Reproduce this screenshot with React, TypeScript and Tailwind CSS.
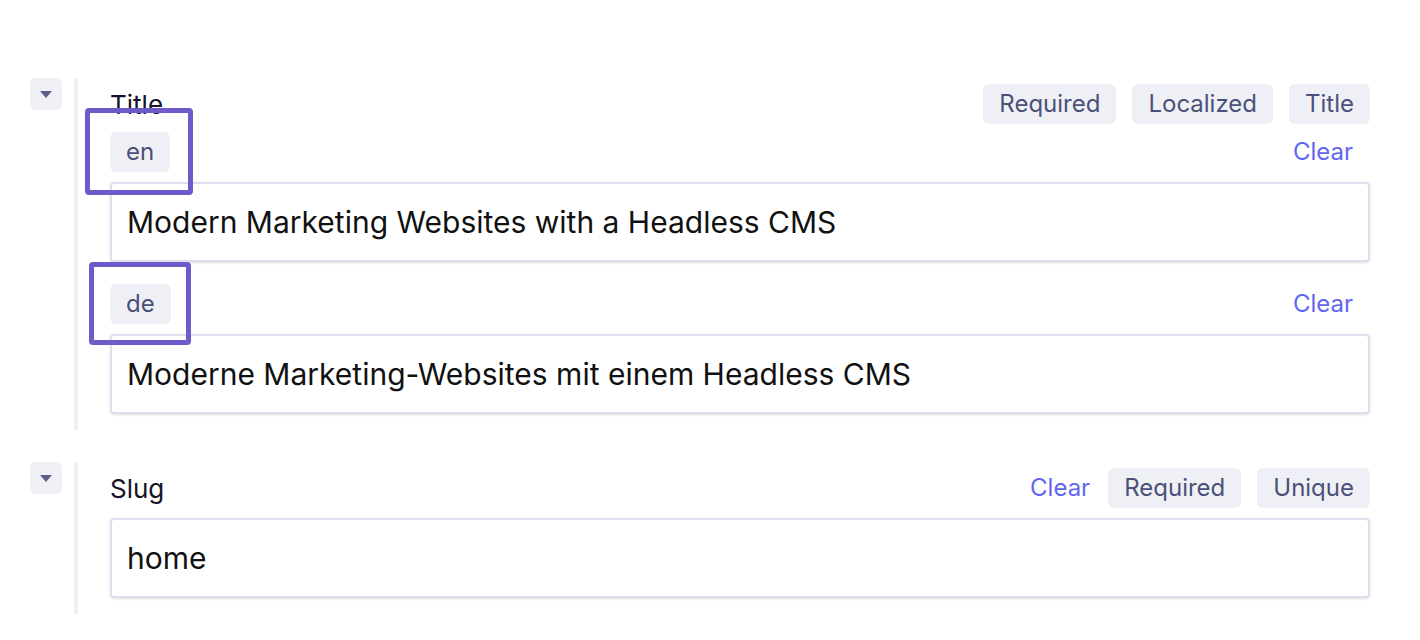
import React from "react";

const font = { fontFamily: "Inter, 'Noto Sans', sans-serif" };

function Badge({ children }: { children: React.ReactNode }) {
  return (
    <span className="inline-flex h-10 items-center rounded-md bg-[#eff0f5] px-4 text-[24px] leading-none text-[#4b5079]">
      {children}
    </span>
  );
}

function ClearButton() {
  return (
    <button className="h-10 text-[24px] leading-none text-[#6366f1]">Clear</button>
  );
}

function Toggle() {
  return (
    <button className="flex h-8 w-8 shrink-0 items-center justify-center rounded-md bg-[#eff0f5]">
      <svg width="12" height="7" viewBox="0 0 12 7">
        <path d="M0 0 L12 0 L6 7 Z" fill="#5c6088" />
      </svg>
    </button>
  );
}

function TextInput({ value }: { value: string }) {
  return (
    <div className="flex h-20 items-center rounded-[4px] border-2 border-[#dcdfee] bg-white pl-[15px] text-[30px] text-[#111111] shadow-sm">
      {value}
    </div>
  );
}

function LocaleRow({
  locale,
  box,
}: {
  locale: string;
  box: "en" | "de";
}) {
  return (
    <div className="flex h-10 items-center justify-between pr-[17px]">
      <span className="relative">
        <Badge>{locale}</Badge>
        {box === "en" ? (
          <span className="pointer-events-none absolute -top-[24px] -bottom-[23px] -left-[25px] -right-[23px] rounded-[4px] border-[5px] border-[#6c5bc8]" />
        ) : (
          <span className="pointer-events-none absolute -top-[22px] -bottom-[21px] -left-[21px] -right-[20px] rounded-[4px] border-[5px] border-[#6c5bc8]" />
        )}
      </span>
      <ClearButton />
    </div>
  );
}

function FieldRow({ children }: { children: React.ReactNode }) {
  return (
    <div className="flex">
      <Toggle />
      <div className="ml-3 flex-1 border-l-4 border-[#eef0f4] pl-8 pt-[6px] pb-4">
        {children}
      </div>
    </div>
  );
}

export default function App() {
  return (
    <div className="min-h-screen bg-white pl-[30px] pr-[50px] pt-[78px]" style={font}>
      <FieldRow>
        <div className="flex h-10 items-center justify-between">
          <span className="text-[26px] text-[#141428]">Title</span>
          <div className="flex gap-4">
            <Badge>Required</Badge>
            <Badge>Localized</Badge>
            <Badge>Title</Badge>
          </div>
        </div>
        <div className="mt-2">
          <LocaleRow locale="en" box="en" />
        </div>
        <div className="mt-[10px]">
          <TextInput value="Modern Marketing Websites with a Headless CMS" />
        </div>
        <div className="mt-[22px]">
          <LocaleRow locale="de" box="de" />
        </div>
        <div className="mt-[10px]">
          <TextInput value="Moderne Marketing-Websites mit einem Headless CMS" />
        </div>
      </FieldRow>

      <div className="mt-8">
        <FieldRow>
          <div className="flex h-10 items-center justify-between">
            <span className="text-[26px] text-[#141428]">Slug</span>
            <div className="flex items-center gap-4">
              <span className="mr-[2px]">
                <ClearButton />
              </span>
              <Badge>Required</Badge>
              <Badge>Unique</Badge>
            </div>
          </div>
          <div className="mt-[10px]">
            <TextInput value="home" />
          </div>
        </FieldRow>
      </div>
    </div>
  );
}
